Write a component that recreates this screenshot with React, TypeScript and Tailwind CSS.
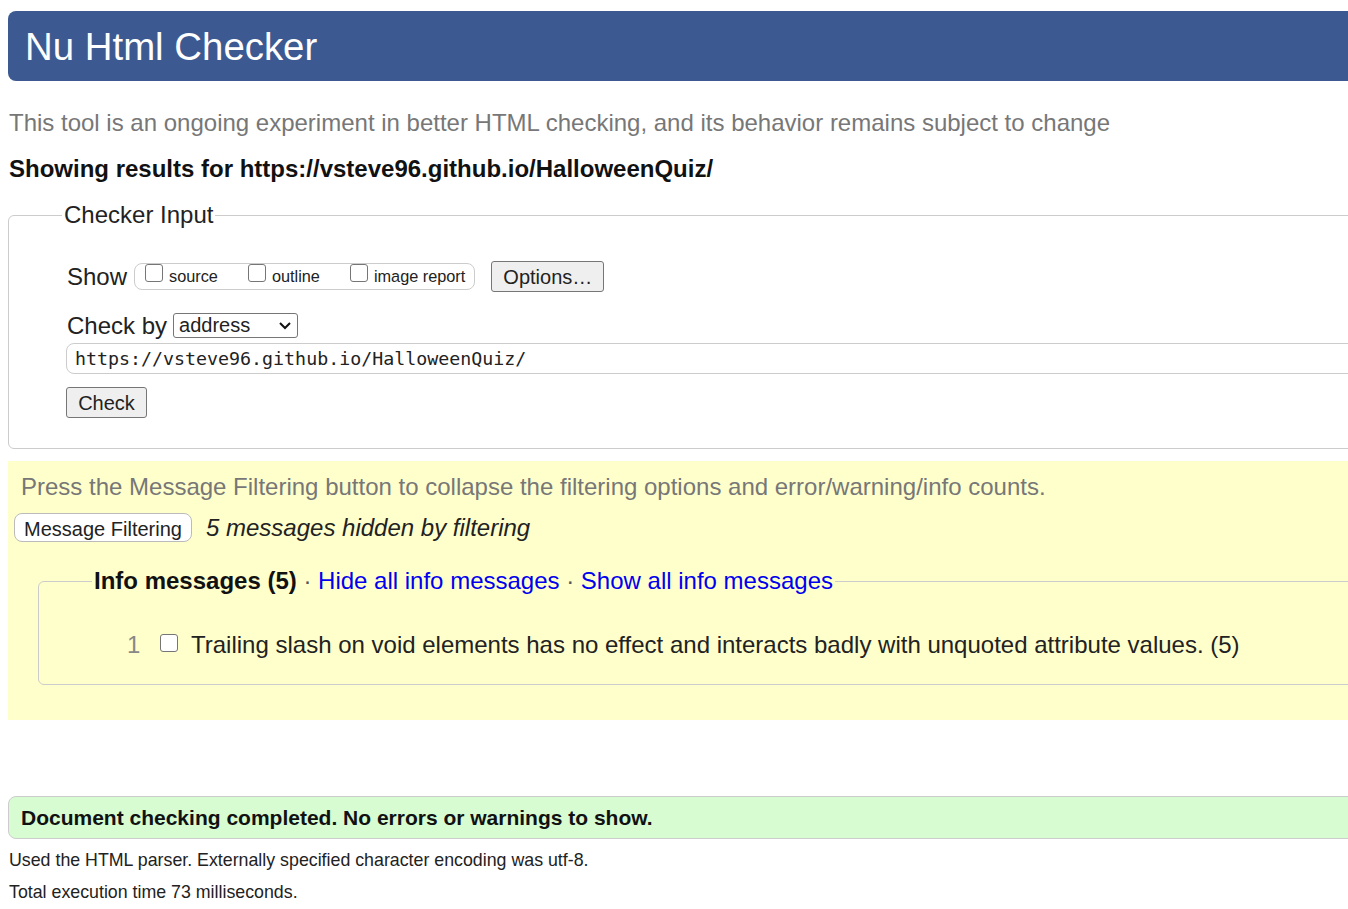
import React from 'react';

function Box({ label }: { label: string }) {
  return (
    <label className="flex items-end gap-[6px]">
      <input type="checkbox" className="appearance-none w-[18px] h-[18px] mb-[7px] bg-white border border-[#767676] rounded-[3px]" />
      <span className="text-[16.3px] leading-[26px]">{label}</span>
    </label>
  );
}

export default function App() {
  return (
    <div className="w-full min-h-[909px] overflow-hidden bg-white text-[#222] font-['Liberation_Sans',Arial,sans-serif]">
      {/* header */}
      <div className="mt-[11px] ml-2 -mr-10 h-[70px] flex items-center pl-[17px] bg-[#3c5a91] rounded-l-lg">
        <h1 className="text-[38.4px] text-white leading-none mt-[2px]">Nu Html Checker</h1>
      </div>

      <p className="mt-[27px] ml-[9px] text-[24px] leading-[30px] text-[#777] whitespace-nowrap">
        This tool is an ongoing experiment in better HTML checking, and its behavior remains subject to change
      </p>
      <p className="mt-[16px] ml-[9px] text-[24px] leading-[30px] font-bold text-[#111] whitespace-nowrap">
        Showing results for https://vsteve96.github.io/HalloweenQuiz/
      </p>

      {/* checker input */}
      <fieldset className="mt-[16px] ml-2 -mr-10 border border-[#ccc] rounded-md">
        <legend className="ml-[53px] px-[2px] text-[24px] leading-[30px]">Checker Input</legend>
        <div className="pl-[57px] pt-[31px] pb-[30px]">
          <div className="flex items-center h-[31px]">
            <span className="ml-[1px] text-[24px] leading-[30px]">Show</span>
            <div className="ml-[7px] h-[27px] flex items-end gap-[30px] pl-[10px] pr-[9px] border border-[#ccc] rounded-lg">
              <Box label="source" />
              <Box label="outline" />
              <Box label="image report" />
            </div>
            <button className="ml-4 h-[31px] w-[113px] text-[20px] bg-[#efefef] border border-[#767676] rounded-[3px]">
              Options…
            </button>
          </div>

          <div className="mt-[19px] flex items-center h-[30px]">
            <span className="ml-[1px] text-[24px] leading-[30px]">Check by</span>
            <div className="relative ml-[6px]">
              <select className="appearance-none w-[125px] h-[25px] pl-[5px] text-[20px] leading-[23px] bg-white border border-[#767676] rounded-[3px]">
                <option>address</option>
              </select>
              <svg className="absolute right-[6px] top-[8px] w-[14px] h-[9px] pointer-events-none" viewBox="0 0 14 9">
                <path d="M2 2l5 5 5-5" fill="none" stroke="#111" strokeWidth="2" />
              </svg>
            </div>
          </div>

          <input
            readOnly
            value="https://vsteve96.github.io/HalloweenQuiz/"
            className="mt-[2px] block w-full h-[31px] pl-2 text-[18.3px] font-['DejaVu_Sans_Mono',monospace] border border-[#ccc] rounded-lg bg-white"
          />

          <button className="mt-[13px] block h-[31px] w-[81px] text-[20px] bg-[#efefef] border border-[#767676] rounded-[3px]">
            Check
          </button>
        </div>
      </fieldset>

      {/* filtering / messages */}
      <div className="mt-3 ml-2 -mr-10 bg-[#ffffcc] pt-[11px] pb-[35px]">
        <p className="ml-[13px] text-[24px] leading-[30px] text-[#777] whitespace-nowrap">
          Press the Message Filtering button to collapse the filtering options and error/warning/info counts.
        </p>
        <div className="mt-[11px] ml-[6px] flex items-center h-[29px]">
          <button className="h-[29px] w-[178px] text-[20px] bg-white border border-[#bbb] rounded-lg">
            Message Filtering
          </button>
          <span className="ml-[14px] text-[24px] leading-[29px] italic">5 messages hidden by filtering</span>
        </div>

        <fieldset className="mt-[24px] ml-[30px] border border-[#ccc] rounded-md">
          <legend className="ml-[53px] px-[2px] text-[24px] leading-[30px] whitespace-nowrap">
            <strong className="text-[#111]">Info messages (5)</strong>
            <span className="text-[#555]"> · </span>
            <a href="#" className="text-[#0000ee]">Hide all info messages</a>
            <span className="text-[#555]"> · </span>
            <a href="#" className="text-[#0000ee]">Show all info messages</a>
          </legend>
          <div className="pt-[34px] pb-[24px] pl-[88px] flex items-center">
            <span className="text-[24px] leading-[30px] text-[#888] w-[10px]">1</span>
            <input type="checkbox" className="appearance-none ml-[23px] -mt-[4px] w-[18px] h-[18px] bg-white border border-[#767676] rounded-[3px]" />
            <span className="ml-[13px] text-[24px] leading-[30px] whitespace-nowrap">
              Trailing slash on void elements has no effect and interacts badly with unquoted attribute values. (5)
            </span>
          </div>
        </fieldset>
      </div>

      {/* result */}
      <div className="mt-[76px] ml-2 -mr-10 h-[43px] flex items-center pl-3 bg-[#d7fcd2] border border-[#ccc] rounded-l-lg">
        <span className="text-[21px] font-bold text-[#111]">Document checking completed. No errors or warnings to show.</span>
      </div>
      <p className="mt-[5px] ml-[9px] text-[17.8px] leading-[32px]">
        Used the HTML parser. Externally specified character encoding was utf-8.
      </p>
      <p className="ml-[9px] text-[17.8px] leading-[32px]">Total execution time 73 milliseconds.</p>
    </div>
  );
}
